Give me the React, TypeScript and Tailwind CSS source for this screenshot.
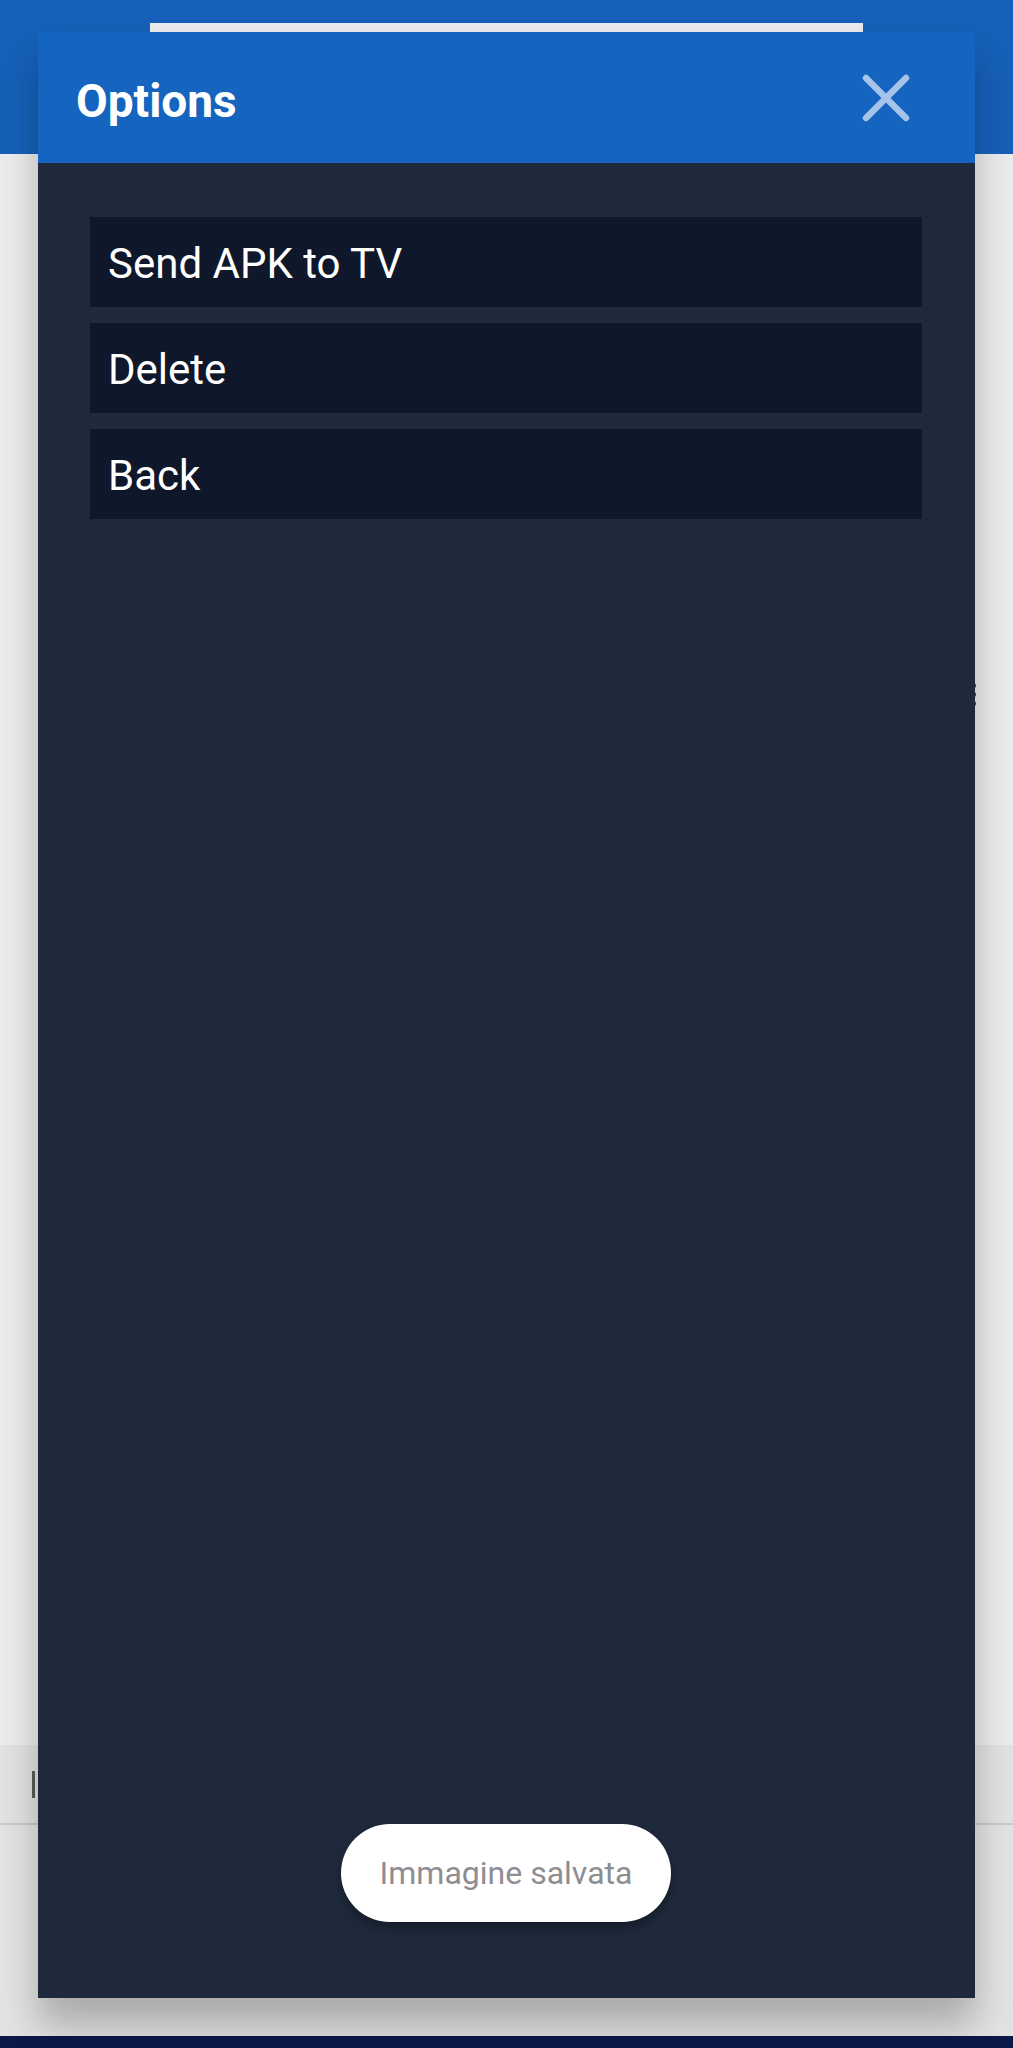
import React from "react";

const ITEMS = ["Send APK to TV", "Delete", "Back"];

function CloseIcon() {
  return (
    <svg width="50" height="50" viewBox="0 0 50 50" fill="none" aria-hidden="true">
      <path
        d="M5 5L45 45M45 5L5 45"
        stroke="#a6c4ea"
        strokeWidth="6.5"
        strokeLinecap="round"
      />
    </svg>
  );
}

export default function App() {
  return (
    <div className="relative h-[2048px] w-full overflow-hidden bg-[#ebebeb] font-['Roboto','Noto_Sans',sans-serif]">
      {/* page behind the dialog */}
      <div className="flex h-full flex-col">
        <header className="h-[154px] bg-[#1660b9] px-[150px] pt-[23px]">
          <div className="h-[10px] bg-[#e8eaed]" />
        </header>

        <main className="relative flex-1 bg-[#ececec]">
          <div className="absolute left-[971px] top-[529px] flex flex-col gap-[4px]">
            <span className="h-[5px] w-[5px] rounded-full bg-[#3a3f47]" />
            <span className="h-[5px] w-[5px] rounded-full bg-[#3a3f47]" />
            <span className="h-[5px] w-[5px] rounded-full bg-[#3a3f47]" />
          </div>
        </main>

        <div className="flex h-[80px] items-center border-b-2 border-[#c9c9c9] bg-[#e2e2e2] pl-[32px]">
          <div className="h-[27px] w-[3px] bg-[#5a5a5a]" />
        </div>

        <div className="h-[211px] bg-[#e3e3e3]" />
        <div className="h-[12px] bg-[#0b1848]" />
      </div>

      {/* Options dialog */}
      <div
        role="dialog"
        aria-label="Options"
        className="absolute left-[38px] top-[32px] flex h-[1966px] w-[937px] flex-col shadow-[0_28px_36px_rgba(0,0,0,0.25)]"
      >
        <div className="flex h-[131px] shrink-0 items-center justify-between bg-[#1565c0] pl-[38px] pr-[64px]">
          <h2 className="pt-[7px] text-[46px] font-bold leading-none text-white">Options</h2>
          <button aria-label="Close" className="flex items-center justify-center">
            <CloseIcon />
          </button>
        </div>

        <div className="flex flex-1 flex-col bg-[#1e293b] pl-[52px] pr-[53px] pt-[54px]">
          <div className="flex flex-col gap-[16px]">
            {ITEMS.map((label) => (
              <button
                key={label}
                className="flex h-[90px] items-center bg-[#0f172a] pl-[18px] pt-[4px] text-left text-[42px] leading-none text-white"
              >
                {label}
              </button>
            ))}
          </div>

          <div className="mb-[76px] mt-auto flex h-[98px] w-[330px] items-center justify-center self-center rounded-full bg-white shadow-[0_6px_10px_rgba(0,0,0,0.3)]">
            <span className="text-[32px] text-[#8d8d92]">Immagine salvata</span>
          </div>
        </div>
      </div>
    </div>
  );
}
